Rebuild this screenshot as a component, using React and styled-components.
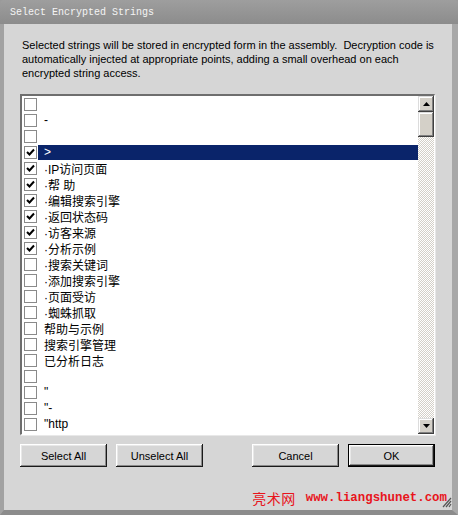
import React from "react";
import styled, { createGlobalStyle } from "styled-components";

const GlobalStyle = createGlobalStyle`
  html, body {
    margin: 0;
    padding: 0;
    background: #8e8e8e;
  }
  body {
    width: 458px;
    height: 515px;
    overflow: hidden;
    font-family: "Liberation Sans", "Noto Sans CJK SC", sans-serif;
  }
`;

const Window = styled.div`
  width: 458px;
  height: 515px;
  display: flex;
  flex-direction: column;
  background: #9a9a9a;
`;

const TitleBar = styled.div`
  height: 24px;
  flex: none;
  display: flex;
  align-items: center;
  padding-left: 10px;
  border-radius: 4px 4px 0 0;
  background: linear-gradient(#9e9e9e, #8c8c8c);
  color: #f4f4f4;
  font-family: "Liberation Mono", monospace;
  font-size: 10px;
`;

const Frame = styled.div`
  flex: 1;
  display: flex;
  border-left: 4px solid #a2a2a2;
  border-right: 6px solid #a8a8a8;
  border-bottom: 5px solid #8c8c8c;
`;

const Body = styled.div`
  flex: 1;
  display: flex;
  flex-direction: column;
  padding-left: 16px;
  background: #d6d6d6;
`;

const Description = styled.p`
  margin: 14px 17px 0 2px;
  font-size: 11px;
  line-height: 14px;
  color: #000;
`;

const ListBox = styled.div`
  margin: 14px 17px 0 0;
  height: 341px;
  box-sizing: border-box;
  display: flex;
  background: #fff;
  border-top: 2px solid #6e6e6e;
  border-left: 2px solid #6e6e6e;
  border-right: 1px solid #ffffff;
  border-bottom: 1px solid #ffffff;
  box-shadow: 1px 1px 0 #e8e8e8;
`;

const Rows = styled.div`
  flex: 1;
  display: flex;
  flex-direction: column;
  overflow: hidden;
`;

const Row = styled.div`
  height: 16px;
  flex: none;
  display: flex;
  align-items: center;
`;

const Box = styled.span`
  width: 11px;
  height: 11px;
  margin-left: 2px;
  flex: none;
  display: flex;
  align-items: center;
  justify-content: center;
  border: 1px solid #8a8a8a;
  background: #fff;
`;

const Label = styled.span`
  flex: 1;
  height: 15px;
  margin-left: 1px;
  padding-left: 6px;
  display: flex;
  align-items: center;
  font-size: 12px;
  white-space: pre;
  background: ${(p) => (p.selected ? "#0a246a" : "transparent")};
  color: ${(p) => (p.selected ? "#fff" : "#000")};
`;

const ScrollBar = styled.div`
  width: 16px;
  flex: none;
  display: flex;
  flex-direction: column;
  background-color: #fff;
  background-image: repeating-conic-gradient(#d4d0c8 0 25%, #fff 0 50%);
  background-size: 2px 2px;
`;

const ScrollPart = styled.div`
  height: ${(p) => p.h}px;
  flex: none;
  display: flex;
  align-items: center;
  justify-content: center;
  background: #d4d0c8;
  box-shadow: inset -1px -1px #404040, inset 1px 1px #dcdcdc,
    inset -2px -2px #808080, inset 2px 2px #fff;
`;

const Track = styled.div`
  flex: 1;
`;

const ButtonRow = styled.div`
  margin: 9px 17px 0 0;
  display: flex;
  justify-content: space-between;
`;

const Group = styled.div`
  display: flex;
  gap: 9px;
`;

const Button = styled.button`
  width: 87px;
  height: 23px;
  padding: 0;
  box-sizing: border-box;
  font-family: "Liberation Sans", sans-serif;
  font-size: 11px;
  color: #000;
  background: #d6d6d6;
  border: ${(p) => (p.primary ? "1px solid #000" : "none")};
  box-shadow: inset -1px -1px #1a1a1a, inset 1px 1px #fff,
    inset -2px -2px #8a8a8a, inset 2px 2px #e8e8e8;
`;

const Footer = styled.div`
  flex: 1;
  display: flex;
  justify-content: flex-end;
  align-items: flex-end;
  padding-bottom: 2px;
`;

const Watermark = styled.div`
  display: flex;
  align-items: center;
  gap: 10px;
  margin-bottom: 1px;
  margin-right: -5px;
  color: #e8141c;
`;

const Brand = styled.span`
  font-family: "Noto Sans CJK SC", sans-serif;
  font-size: 14px;
  line-height: 18px;
  letter-spacing: 0.5px;
`;

const Url = styled.span`
  font-family: "Liberation Mono", monospace;
  font-size: 12.4px;
  font-weight: bold;
  line-height: 18px;
`;

const Check = () => (
  <svg width="9" height="9" viewBox="0 0 9 9">
    <path d="M1 4 L3.5 6.5 L8 1.5" fill="none" stroke="#000" strokeWidth="2" />
  </svg>
);

const Arrow = ({ down }) => (
  <svg width="7" height="4" viewBox="0 0 7 4">
    <path d={down ? "M0 0 H7 L3.5 4 Z" : "M0 4 H7 L3.5 0 Z"} fill="#000" />
  </svg>
);

const Grip = () => (
  <svg width="10" height="12" viewBox="0 0 10 12">
    <path
      d="M9 2 L1 11 M9 5 L4 11 M9 8 L7 11"
      stroke="#555"
      strokeWidth="1.2"
      fill="none"
    />
  </svg>
);

const items = [
  { text: "", checked: false },
  { text: "-", checked: false },
  { text: "", checked: false },
  { text: ">", checked: true, selected: true },
  { text: "·IP访问页面", checked: true },
  { text: "·帮 助", checked: true },
  { text: "·编辑搜索引擎", checked: true },
  { text: "·返回状态码", checked: true },
  { text: "·访客来源", checked: true },
  { text: "·分析示例", checked: true },
  { text: "·搜索关键词", checked: false },
  { text: "·添加搜索引擎", checked: false },
  { text: "·页面受访", checked: false },
  { text: "·蜘蛛抓取", checked: false },
  { text: "帮助与示例", checked: false },
  { text: "搜索引擎管理", checked: false },
  { text: "已分析日志", checked: false },
  { text: "", checked: false },
  { text: "\"", checked: false },
  { text: "\"-", checked: false },
  { text: "\"http", checked: false },
];

const App = () => {
  return (
    <Window>
      <GlobalStyle />
      <TitleBar>Select Encrypted Strings</TitleBar>
      <Frame>
        <Body>
          <Description>
            Selected strings will be stored in encrypted form in the assembly.
            &nbsp;Decryption code is automatically injected at appropriate
            points, adding a small overhead on each encrypted string access.
          </Description>
          <ListBox>
            <Rows>
              {items.map((item, i) => (
                <Row key={i}>
                  <Box>{item.checked && <Check />}</Box>
                  <Label selected={item.selected}>{item.text}</Label>
                </Row>
              ))}
            </Rows>
            <ScrollBar>
              <ScrollPart h={16}>
                <Arrow />
              </ScrollPart>
              <ScrollPart h={25} />
              <Track />
              <ScrollPart h={16}>
                <Arrow down />
              </ScrollPart>
            </ScrollBar>
          </ListBox>
          <ButtonRow>
            <Group>
              <Button>Select All</Button>
              <Button>Unselect All</Button>
            </Group>
            <Group>
              <Button>Cancel</Button>
              <Button primary>OK</Button>
            </Group>
          </ButtonRow>
          <Footer>
            <Watermark>
              <Brand>亮术网</Brand>
              <Url>www.liangshunet.com</Url>
            </Watermark>
            <Grip />
          </Footer>
        </Body>
      </Frame>
    </Window>
  );
};

export default App;
